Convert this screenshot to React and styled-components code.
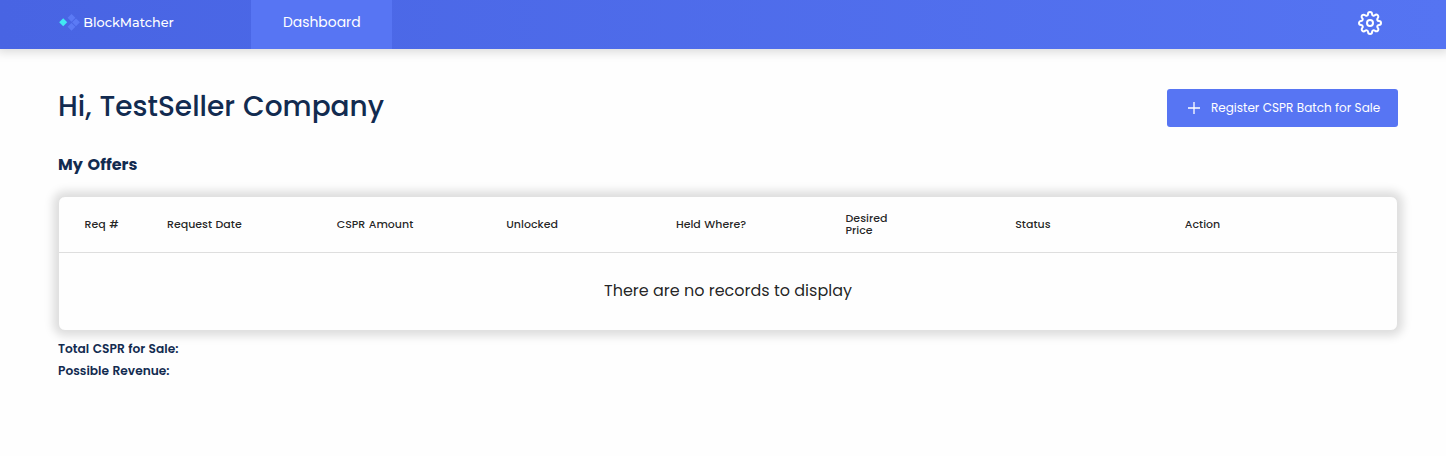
import React from 'react';
import styled, { createGlobalStyle } from 'styled-components';
import { FiSettings } from 'react-icons/fi';

const GlobalStyle = createGlobalStyle`
  * { box-sizing: border-box; }
  body {
    margin: 0;
    background: #fefefe;
    color: #122b50;
    font-family: Poppins, Inter, "Liberation Sans", sans-serif;
  }
`;

const Header = styled.header`
  display: flex;
  height: 49px;
  padding: 0 64px 0 58px;
  background: linear-gradient(90deg, #4864e3 0%, #5574f2 100%);
  box-shadow: 0 0 10px 3px rgba(0, 0, 0, 0.15);
`;

const Brand = styled.a`
  display: flex;
  align-items: center;
  width: 193px;
  height: 44px;
  color: #fff;
  font-family: Montserrat, Poppins, Inter, sans-serif;
  font-size: 12.8px;
  font-weight: 500;
`;

const LogoMark = styled.svg`
  width: 22px;
  height: 20px;
  margin-right: 3.3px;
`;

const NavTab = styled.a`
  height: 49px;
  width: 141px;
  padding-left: 32px;
  background: #5775f3;
  color: #fff;
  font-size: 13.9px;
  line-height: 44px;
`;

const SettingsButton = styled.button`
  display: flex;
  margin: 11px 0 0 auto;
  padding: 0;
  height: 24px;
  border: 0;
  background: none;
  color: #fff;
`;

const Main = styled.main`
  padding: 40px 48px 0 58px;
`;

const TitleRow = styled.div`
  display: flex;
  justify-content: space-between;
  align-items: flex-start;
`;

const Title = styled.h1`
  margin: 0;
  font-size: 28px;
  font-weight: 500;
  line-height: 36px;
  word-spacing: 0.8px;
`;

const RegisterButton = styled.button`
  display: flex;
  align-items: center;
  gap: 11px;
  width: 231px;
  height: 38px;
  padding: 0 0 0 21px;
  border: 0;
  border-radius: 3px;
  background: #5775f3;
  color: #fff;
  font: inherit;
  font-size: 12px;
  word-spacing: 0.25px;
  white-space: nowrap;
`;

const SectionTitle = styled.h2`
  margin: 26px 0 19px;
  font-size: 16px;
  font-weight: 700;
  line-height: 24px;
  word-spacing: 1.4px;
`;

const TableCard = styled.section`
  border: 1px solid #e1e1e1;
  border-radius: 7px;
  background: #fefefe;
  color: rgba(0, 0, 0, 0.87);
  box-shadow: 0 0 10px 5px rgba(0, 0, 0, 0.135);
`;

const TableHead = styled.div`
  display: grid;
  grid-template-columns: 82.5px repeat(7, 169.65px);
  align-items: center;
  height: 56px;
  padding: 0 0 2px 25.5px;
  border-bottom: 1px solid #dedede;
`;

const HeadCell = styled.div`
  font-size: 11px;
  font-weight: 500;
  line-height: 12px;
  word-spacing: 0.6px;
  width: ${(p) => (p.$narrow ? '60px' : 'auto')};
`;

const EmptyMessage = styled.div`
  padding: 26px 0 27px;
  font-size: 16px;
  line-height: 24px;
  text-align: center;
`;

const Totals = styled.div`
  margin-top: 7px;
  font-size: 12.2px;
  font-weight: 600;
  line-height: 22px;
  word-spacing: 0.6px;
`;

const columns = [
  { label: 'Req #' },
  { label: 'Request Date' },
  { label: 'CSPR Amount' },
  { label: 'Unlocked' },
  { label: 'Held Where?' },
  { label: 'Desired Price', narrow: true },
  { label: 'Status' },
  { label: 'Action' },
];

export default function App() {
  return (
    <>
      <GlobalStyle />
      <Header>
        <Brand>
          <LogoMark viewBox="0 0 22 20" aria-hidden="true">
            <path d="M5.2 6.2 9.2 10.2 5.2 14.2 1.2 10.2Z" fill="#41e8f2" />
            <g fill="#5b7af5">
              <path d="M13.5 1.9 17.4 5.8 13.5 9.7 9.6 5.8Z" />
              <path d="M18 6.4 21.9 10.3 18 14.2 14.1 10.3Z" />
              <path d="M13.5 10.9 17.4 14.8 13.5 18.7 9.6 14.8Z" />
            </g>
          </LogoMark>
          BlockMatcher
        </Brand>
        <NavTab>Dashboard</NavTab>
        <SettingsButton aria-label="Settings">
          <FiSettings size={24} />
        </SettingsButton>
      </Header>
      <Main>
        <TitleRow>
          <Title>Hi, TestSeller Company</Title>
          <RegisterButton>
            <svg width="12" height="12" viewBox="0 0 12 12" aria-hidden="true">
              <path d="M6 0V12M0 6H12" stroke="#fff" strokeWidth="1.3" />
            </svg>
            Register CSPR Batch for Sale
          </RegisterButton>
        </TitleRow>
        <SectionTitle>My Offers</SectionTitle>
        <TableCard>
          <TableHead>
            {columns.map((c) => (
              <HeadCell key={c.label} $narrow={c.narrow}>
                {c.label}
              </HeadCell>
            ))}
          </TableHead>
          <EmptyMessage>There are no records to display</EmptyMessage>
        </TableCard>
        <Totals>
          <div>Total CSPR for Sale:</div>
          <div>Possible Revenue:</div>
        </Totals>
      </Main>
    </>
  );
}
